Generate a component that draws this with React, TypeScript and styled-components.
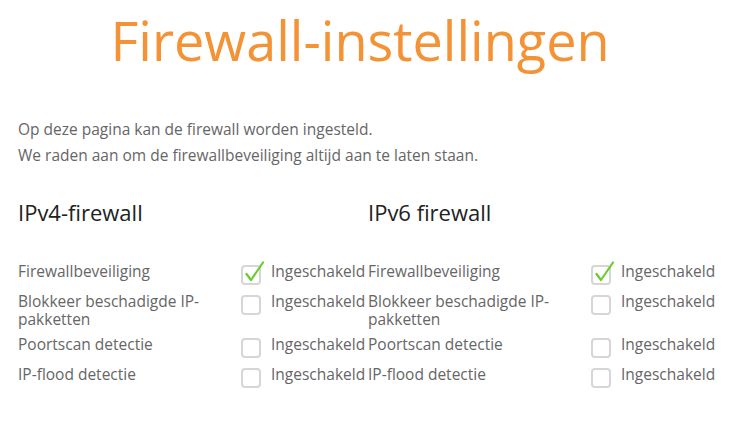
import styled, { createGlobalStyle } from "styled-components";

const Global = createGlobalStyle`
  body {
    margin: 0;
    background: #fff;
    font-family: "Open Sans", "Noto Sans", sans-serif;
  }
`;

const Page = styled.div`
  padding: 0 18px;
  width: 739px;
  box-sizing: border-box;
`;

const Title = styled.h1`
  margin: 0;
  padding: 5px 19px 0 0;
  text-align: center;
  font-size: 54px;
  font-weight: 400;
  line-height: 70px;
  color: #f39335;
`;

const Intro = styled.div`
  margin-top: 41px;
  color: #666;
  font-size: 15.5px;
  line-height: 26px;

  p {
    margin: 0;
  }
`;

const Columns = styled.div`
  display: grid;
  grid-template-columns: 350px 350px;
  margin-top: 29px;
`;

const Heading = styled.h2`
  margin: 0 0 32px;
  font-size: 22px;
  font-weight: 400;
  line-height: 30px;
  color: #222;
`;

const Row = styled.div`
  display: grid;
  grid-template-columns: 223px 20px auto;
  align-items: start;
  padding: 4px 0;
  color: #666;
  font-size: 15.5px;
  line-height: 17.5px;
`;

const Label = styled.div``;

const Status = styled.div`
  margin-left: 10px;
  white-space: nowrap;
`;

const Box = styled.span`
  position: relative;
  display: block;
  width: 20px;
  height: 20px;
  margin-top: 2px;
  box-sizing: border-box;
  border: 2px solid #d6d6d6;
  border-radius: 4px;
  background: #fff;

  svg {
    position: absolute;
    left: 0;
    top: -7px;
  }
`;

const Check = () => (
  <svg width="22" height="24" viewBox="0 0 22 24">
    <path
      d="M3.5 14 L8 20 L20 2.5"
      fill="none"
      stroke="#6ccb2e"
      strokeWidth="2.2"
      strokeLinecap="round"
      strokeLinejoin="round"
    />
  </svg>
);

type Setting = { label: string; on: boolean };

const settings: Setting[] = [
  { label: "Firewallbeveiliging", on: true },
  { label: "Blokkeer beschadigde IP-pakketten", on: false },
  { label: "Poortscan detectie", on: false },
  { label: "IP-flood detectie", on: false },
];

const Panel = ({ title }: { title: string }) => (
  <div>
    <Heading>{title}</Heading>
    {settings.map((s) => (
      <Row key={s.label}>
        <Label>{s.label}</Label>
        <Box>{s.on && <Check />}</Box>
        <Status>Ingeschakeld</Status>
      </Row>
    ))}
  </div>
);

const App = () => (
  <Page>
    <Global />
    <Title>Firewall-instellingen</Title>
    <Intro>
      <p>Op deze pagina kan de firewall worden ingesteld.</p>
      <p>We raden aan om de firewallbeveiliging altijd aan te laten staan.</p>
    </Intro>
    <Columns>
      <Panel title="IPv4-firewall" />
      <Panel title="IPv6 firewall" />
    </Columns>
  </Page>
);

export default App;
